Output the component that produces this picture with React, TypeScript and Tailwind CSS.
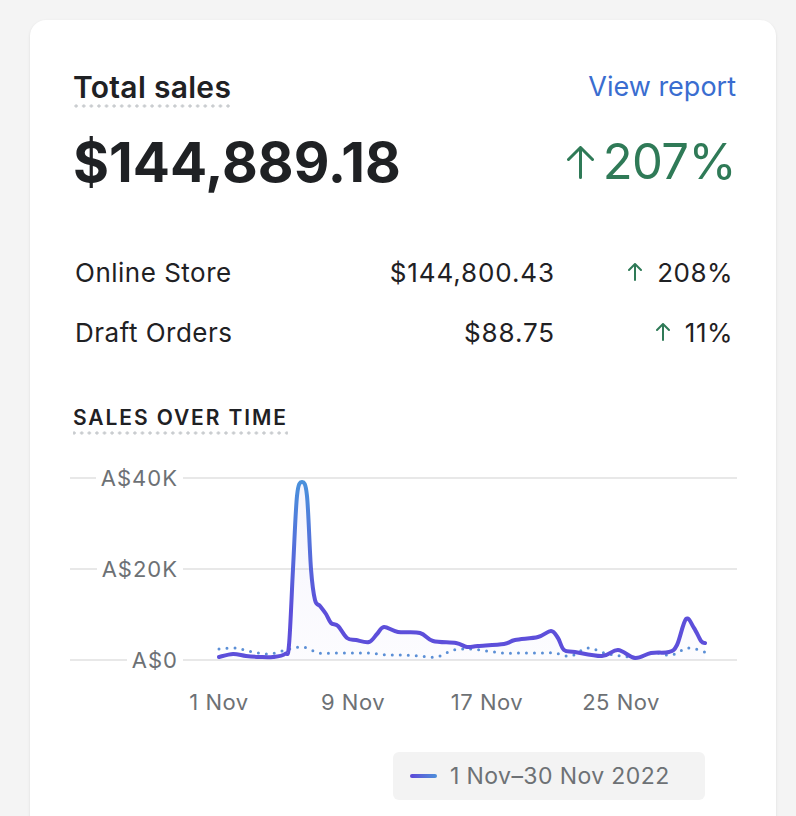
import React from "react";

type Pt = [number, number];

// chart points in page coordinates (x from 1 Nov to 30 Nov, y with A$0 at 660)
const current: Pt[] = [
  [219, 657], [233, 654], [246, 656], [260, 657], [273, 657], [285, 654],
  [289, 645], [293, 569], [297, 496], [302, 482], [307, 496], [311, 569],
  [315, 600], [320, 606], [326, 614], [331, 623], [338, 626], [347, 638],
  [356, 640], [369, 642], [377, 634], [384, 627], [398, 632], [420, 633],
  [433, 641], [456, 643], [467, 647], [478, 646], [504, 644], [515, 640],
  [538, 637], [551, 631], [558, 638], [564, 650], [575, 652], [602, 656],
  [618, 650], [635, 658], [651, 653], [669, 652], [677, 645], [686, 619],
  [694, 628], [701, 641], [705, 643],
];

const previousY = [
  649, 648, 652, 654, 650, 647, 653, 653, 653, 653, 655, 655, 656, 657, 650,
  649, 651, 653, 653, 653, 653, 656, 648, 653, 656, 657, 653, 655, 648, 652,
];
const previous: Pt[] = previousY.map((y, i) => [219 + i * 16.75, y]);

function smooth(pts: Pt[]) {
  let d = `M${pts[0][0]} ${pts[0][1]}`;
  for (let i = 0; i < pts.length - 1; i++) {
    const p0 = pts[i - 1] || pts[i];
    const p1 = pts[i];
    const p2 = pts[i + 1];
    const p3 = pts[i + 2] || p2;
    const c1x = p1[0] + (p2[0] - p0[0]) / 6;
    const c1y = p1[1] + (p2[1] - p0[1]) / 6;
    const c2x = p2[0] - (p3[0] - p1[0]) / 6;
    const c2y = p2[1] - (p3[1] - p1[1]) / 6;
    d += ` C${c1x} ${c1y} ${c2x} ${c2y} ${p2[0]} ${p2[1]}`;
  }
  return d;
}

const UpArrow = ({ w, h, sw }: { w: number; h: number; sw: number }) => (
  <svg width={w} height={h} viewBox={`0 0 ${w} ${h}`} fill="none">
    <path
      d={`M${w / 2} ${h - sw / 2} V${sw / 2} M${sw / 2} ${w / 2} L${w / 2} ${sw / 2} L${w - sw / 2} ${w / 2}`}
      stroke="#2f7a57"
      strokeWidth={sw}
      strokeLinecap="round"
      strokeLinejoin="round"
    />
  </svg>
);

const dotted =
  "bg-[radial-gradient(circle,#c9cccf_1.4px,transparent_1.8px)] bg-[length:7.6px_4px] bg-bottom bg-repeat-x";

const rows = [
  { name: "Online Store", amount: "$144,800.43", pct: "208%" },
  { name: "Draft Orders", amount: "$88.75", pct: "11%" },
];

const yLabels = ["A$40K", "A$20K", "A$0"];
const xLabels = ["1 Nov", "9 Nov", "17 Nov", "25 Nov"];

const App = () => {
  const line = smooth(current);
  const area = `${line} L705 660 L219 660 Z`;

  return (
    <div
      className="min-h-screen bg-[#f4f4f4] pt-[20px] pl-[30px] pr-[20px] text-[#1f2124]"
      style={{ fontFamily: "Inter, 'Noto Sans', sans-serif" }}
    >
      <div className="w-[746px] rounded-[16px] bg-white pt-[49px] pl-[43px] pr-[40px] pb-[40px] shadow-[0_1px_3px_rgba(0,0,0,0.1)]">
        {/* header */}
        <div className="flex items-start justify-between">
          <span className={`text-[30px] font-semibold leading-[36px] tracking-[0.3px] pb-[3px] ${dotted}`}>
            Total sales
          </span>
          <a className="text-[27px] leading-[36px] text-[#3a6dd0]">View report</a>
        </div>

        <div className="mt-[24px] flex items-center justify-between">
          <span className="text-[55px] font-bold leading-[60px]">$144,889.18</span>
          <span className="flex items-center gap-[9px] text-[49px] leading-[60px] tracking-[-0.6px] text-[#2f7a57]">
            <UpArrow w={27} h={33} sw={3} />
            207%
          </span>
        </div>

        {/* breakdown */}
        <div className="mt-[50px]">
          {rows.map((r) => (
            <div key={r.name} className="flex h-[60px] items-center text-[26px] tracking-[0.5px]">
              <span className="flex-1 pl-[2px]">{r.name}</span>
              <span className="text-right tracking-[0.9px]">{r.amount}</span>
              <span className="flex w-[181px] items-center justify-end gap-[15px] pr-[3px]">
                <UpArrow w={14} h={18} sw={2} />
                {r.pct}
              </span>
            </div>
          ))}
        </div>

        <div className="mt-[42px]">
          <span className={`inline-block text-[21px] font-semibold leading-[28px] tracking-[1.9px] pb-[3px] ${dotted}`}>
            SALES OVER TIME
          </span>
        </div>

        {/* chart */}
        <div className="relative mt-[32px] -ml-[3px] w-[667px]">
          <div className="flex flex-col gap-[69px]">
            {yLabels.map((l) => (
              <div key={l} className="flex h-[22px] items-center">
                <div className="flex w-[113px] items-center">
                  <div className="h-[1.5px] flex-1 bg-[#e8e8e8]" />
                  <span className="pl-[5px] pr-[5px] text-[22px] leading-[22px] tracking-[1px] text-[#6d7175]">{l}</span>
                </div>
                <div className="h-[1.5px] flex-1 bg-[#e8e8e8]" />
              </div>
            ))}
          </div>
          <svg
            className="absolute left-0 top-0 overflow-visible"
            width={667}
            height={204}
            viewBox="70 467 667 204"
            fill="none"
          >
            <defs>
              <linearGradient id="lineGrad" x1="0" y1="480" x2="0" y2="610" gradientUnits="userSpaceOnUse">
                <stop offset="0" stopColor="#4a92dc" />
                <stop offset="1" stopColor="#5d4fda" />
              </linearGradient>
              <linearGradient id="areaGrad" x1="0" y1="480" x2="0" y2="660" gradientUnits="userSpaceOnUse">
                <stop offset="0" stopColor="#6a5ae0" stopOpacity="0.06" />
                <stop offset="1" stopColor="#6a5ae0" stopOpacity="0.02" />
              </linearGradient>
            </defs>
            <path d={area} fill="url(#areaGrad)" />
            <path
              d={smooth(previous)}
              stroke="#5b8fd6"
              strokeWidth={3}
              strokeLinecap="round"
              strokeDasharray="0 8"
            />
            <path
              d={line}
              stroke="url(#lineGrad)"
              strokeWidth={4}
              strokeLinecap="round"
              strokeLinejoin="round"
            />
          </svg>
          <div className="mt-[17px] flex pl-[82px]">
            {xLabels.map((l) => (
              <span key={l} className="w-[134px] text-center text-[22px] leading-[28px] tracking-[0.5px] text-[#6d7175]">
                {l}
              </span>
            ))}
          </div>
        </div>

        {/* legend */}
        <div className="mt-[36px] flex justify-end pr-[31px]">
          <div className="flex h-[48px] w-[312px] items-center gap-[13px] rounded-[6px] bg-[#f3f3f3] pl-[17px]">
            <div className="h-[4px] w-[27px] rounded-full bg-gradient-to-r from-[#5c45d8] to-[#4c8fd9]" />
            <span className="text-[23px] tracking-[0.4px] text-[#6d7175]">1 Nov–30 Nov 2022</span>
          </div>
        </div>
      </div>
    </div>
  );
};

export default App;
